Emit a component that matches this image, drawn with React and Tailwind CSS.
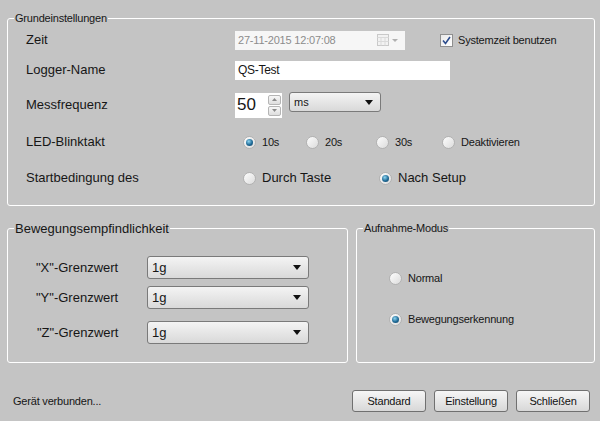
import React from "react";

function Radio({ checked }) {
  return (
    <span className="flex h-[13px] w-[13px] shrink-0 items-center justify-center rounded-full border border-[#b2b2b2] bg-gradient-to-br from-[#fdfdfd] to-[#dcdcdc]">
      {checked && (
        <span className="h-[7px] w-[7px] rounded-full bg-[radial-gradient(circle_at_40%_35%,#8fd6f2,#1f6a96_55%,#123f60)]" />
      )}
    </span>
  );
}

function Option({ checked, label, className = "", textClass = "text-[11px] tracking-[-0.2px]" }) {
  return (
    <div className={`flex items-center gap-[6px] ${className}`}>
      <Radio checked={checked} />
      <span className={textClass}>{label}</span>
    </div>
  );
}

function Caret() {
  return (
    <svg width="8" height="5" viewBox="0 0 8 5" className="shrink-0">
      <path d="M0 0h8L4 5z" fill="#111" />
    </svg>
  );
}

function Combo({ value, className = "", textClass = "text-[13px]" }) {
  return (
    <div
      className={`flex items-center rounded-[3px] border border-[#7a7a7a] bg-gradient-to-b from-[#f4f4f4] to-[#d9d9d9] pl-[4px] pr-[7px] ${className}`}
    >
      <span className={textClass}>{value}</span>
      <span className="ml-auto">
        <Caret />
      </span>
    </div>
  );
}

function WinButton({ children }) {
  return (
    <button className="h-[22px] w-[74px] rounded-[3px] border border-[#707070] bg-gradient-to-b from-[#f6f6f6] to-[#d8d8d8] text-[11px] tracking-[-0.2px] text-[#111]">
      {children}
    </button>
  );
}

function Spin({ up }) {
  return (
    <span className="flex h-[10px] w-[13px] items-center justify-center rounded-[2px] border border-[#b5b5b5] bg-gradient-to-b from-[#f7f7f7] to-[#dedede]">
      <svg width="5" height="3" viewBox="0 0 5 3">
        <path d={up ? "M0 3h5L2.5 0z" : "M0 0h5L2.5 3z"} fill="#8a8a8a" />
      </svg>
    </span>
  );
}

export default function App() {
  return (
    <div className="h-[421px] w-[600px] overflow-hidden bg-[#c4c4c4] font-['Liberation_Sans',Arial,sans-serif] text-[#161616]">
      <fieldset className="ml-[7px] mr-[5px] mt-[12px] rounded-[3px] border border-white">
        <legend className="ml-[6px] px-[1px] text-[11px] leading-[13px] tracking-[-0.2px]">Grundeinstellungen</legend>
        <div className="pb-[17px] pl-[18px] pt-[5px] text-[13px]">
          <div className="flex h-[20px] items-center">
            <span className="w-[209px]">Zeit</span>
            <div className="flex h-[19px] w-[170px] items-center bg-[#f6f6f6] pl-[3px] pr-[7px]">
              <span className="text-[11px] tracking-[-0.2px] text-[#8c8c8c]">27-11-2015 12:07:08</span>
              <svg width="12" height="12" viewBox="0 0 12 12" className="ml-auto">
                <rect x="0.5" y="0.5" width="11" height="11" fill="#f2f2f2" stroke="#c9c9c9" />
                <path d="M0.5 3.5h11M4 3.5v8M8 3.5v8M0.5 7.5h11" stroke="#dadada" />
              </svg>
              <svg width="6" height="3" viewBox="0 0 6 3" className="ml-[3px]">
                <path d="M0 0h6L3 3z" fill="#b0b0b0" />
              </svg>
            </div>
            <span className="ml-[35px] flex h-[13px] w-[13px] items-center justify-center border border-[#8f8f8f] bg-gradient-to-br from-[#e9e9e9] to-[#ffffff]">
              <svg width="9" height="9" viewBox="0 0 9 9">
                <path d="M1 4.5L3.5 7.5L8 1" fill="none" stroke="#2c4c8c" strokeWidth="1.6" />
              </svg>
            </span>
            <span className="ml-[5px] text-[11px] tracking-[-0.2px]">Systemzeit benutzen</span>
          </div>

          <div className="mt-[10px] flex h-[20px] items-center">
            <span className="w-[209px]">Logger-Name</span>
            <div className="flex h-[19px] w-[215px] items-center bg-white pl-[3px] text-[12px] tracking-[-0.3px]">QS-Test</div>
          </div>

          <div className="mt-[12px] flex h-[26px] items-center">
            <span className="w-[209px]">Messfrequenz</span>
            <div className="flex h-[25px] w-[47px] items-center bg-white pl-[2px]">
              <span className="text-[17px]">50</span>
              <div className="ml-auto mr-[1px] flex flex-col gap-[1px]">
                <Spin up />
                <Spin />
              </div>
            </div>
            <Combo value="ms" className="ml-[7px] h-[20px] w-[92px] self-start" textClass="text-[11px]" />
          </div>

          <div className="mt-[14px] flex h-[20px] items-center">
            <span className="w-[209px]">LED-Blinktakt</span>
            <div className="flex items-center pl-[8px]">
              <Option checked label="10s" className="w-[63px]" />
              <Option label="20s" className="w-[70px]" />
              <Option label="30s" className="w-[66px]" />
              <Option label="Deaktivieren" />
            </div>
          </div>

          <div className="mt-[16px] flex h-[20px] items-center">
            <span className="w-[209px]">Startbedingung des</span>
            <div className="flex items-center pl-[8px]">
              <Option label="Durch Taste" className="w-[136px]" textClass="text-[13px]" />
              <Option checked label="Nach Setup" textClass="text-[13px]" />
            </div>
          </div>
        </div>
      </fieldset>

      <div className="ml-[7px] mr-[5px] mt-[15px] flex items-stretch gap-[8px]">
        <fieldset className="w-[341px] rounded-[3px] border border-white">
          <legend className="ml-[6px] px-[1px] text-[13px] leading-[15px]">Bewegungsempfindlichkeit</legend>
          <div className="pb-[18px] pl-[28px] pt-[20px] text-[13px]">
            <div className="flex h-[23px] items-center">
              <span className="w-[111px]">"X"-Grenzwert</span>
              <Combo value="1g" className="h-[23px] w-[162px]" />
            </div>
            <div className="mt-[7px] flex h-[23px] items-center">
              <span className="w-[111px]">"Y"-Grenzwert</span>
              <Combo value="1g" className="h-[23px] w-[162px]" />
            </div>
            <div className="mt-[12px] flex h-[23px] items-center">
              <span className="w-[111px] pl-[1px]">"Z"-Grenzwert</span>
              <Combo value="1g" className="h-[23px] w-[162px]" />
            </div>
          </div>
        </fieldset>

        <fieldset className="flex-1 rounded-[3px] border border-white">
          <legend className="ml-[6px] px-[1px] text-[11px] leading-[15px] tracking-[-0.2px]">Aufnahme-Modus</legend>
          <div className="pl-[32px] pt-[32px]">
            <Option label="Normal" className="h-[20px]" />
            <Option checked label="Bewegungserkennung" className="mt-[21px] h-[20px]" />
          </div>
        </fieldset>
      </div>

      <div className="mt-[27px] flex h-[22px] items-center">
        <span className="pl-[13px] text-[11px] tracking-[-0.2px]">Gerät verbunden...</span>
        <div className="ml-auto mr-[10px] flex gap-[8px]">
          <WinButton>Standard</WinButton>
          <WinButton>Einstellung</WinButton>
          <WinButton>Schließen</WinButton>
        </div>
      </div>
    </div>
  );
}
